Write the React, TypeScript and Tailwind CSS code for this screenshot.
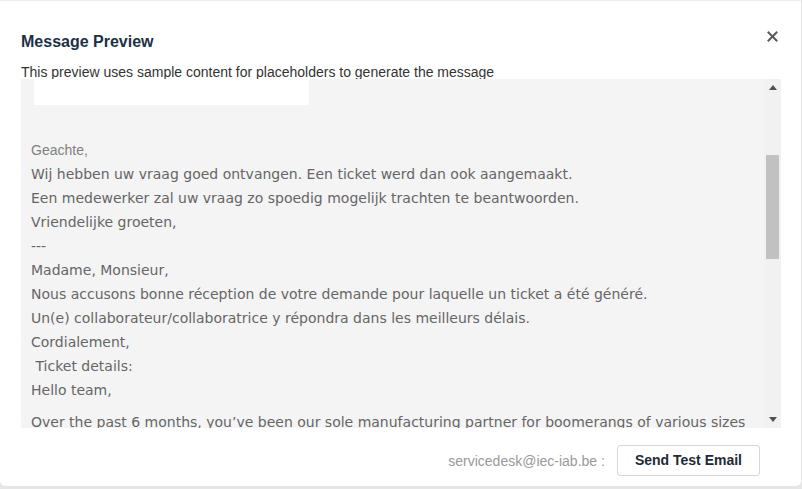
import { useEffect, useRef } from 'react';

const dutch = [
  'Wij hebben uw vraag goed ontvangen. Een ticket werd dan ook aangemaakt.',
  'Een medewerker zal uw vraag zo spoedig mogelijk trachten te beantwoorden.',
  'Vriendelijke groeten,',
  '---',
];

const french = [
  'Madame, Monsieur,',
  'Nous accusons bonne réception de votre demande pour laquelle un ticket a été généré.',
  'Un(e) collaborateur/collaboratrice y répondra dans les meilleurs délais.',
  'Cordialement,',
];

const body = [
  "Over the past 6 months, you’ve been our sole manufacturing partner for boomerangs of various sizes and shapes. We’ve been very happy with the quality of the products and the speed of delivery so far.",
  'Unfortunately, we noticed that the last three shipments arrived with a number of damaged items. The packaging seems to be the problem, as the boxes were crushed on arrival.',
  'Could you look into this and let us know how we can prevent it in the future? We would also like to discuss a replacement for the damaged boomerangs.',
  'Thanks in advance,',
];

export default function App() {
  const scrollRef = useRef<HTMLDivElement>(null);

  useEffect(() => {
    if (scrollRef.current) scrollRef.current.scrollTop = 198;
  }, []);

  return (
    <div className="w-[802px] h-[489px] bg-[#e6e6e6]" style={{ fontFamily: '"Liberation Sans", Arial, sans-serif' }}>
      <div className="w-[801px] h-[486px] bg-white border-t border-[#ececec] rounded-b-[5px] flex flex-col">
        {/* Header */}
        <div className="flex items-start justify-between pl-[21px] pr-[23px] pt-[31px]">
          <h2 className="text-[16px] leading-[20px] font-bold text-[#1c3146]">Message Preview</h2>
          <button className="mt-[-1px] text-[#5a5a5a]">
            <svg width="11" height="11" viewBox="0 0 11 11">
              <path d="M1.5 1.5 L9.5 9.5 M9.5 1.5 L1.5 9.5" stroke="currentColor" strokeWidth="2" strokeLinecap="square" />
            </svg>
          </button>
        </div>
        <p className="pl-[21px] mt-[11px] text-[14px] leading-[18px] text-[#333]">
          This preview uses sample content for placeholders to generate the message
        </p>

        {/* Preview box */}
        <div className="ml-[21px] w-[760px] h-[349px] bg-[#f4f4f4] shrink-0 flex -mt-[2px]">
          <div ref={scrollRef} className="flex-1 overflow-hidden">
            <div className="pl-[10px] pr-[8px] pt-[10px] pb-[20px]">
              <div className="ml-[3px] w-[275px] h-[214px] bg-white" />
              <div className="mt-[33px] text-[14px] leading-[24px] text-[#808080]">Geachte,</div>
              <div className="text-[14px] leading-[24px] text-[#666]" style={{ fontFamily: '"DejaVu Sans", Verdana, sans-serif' }}>
                {dutch.map((l, i) => (
                  <div key={i}>{l}</div>
                ))}
                {french.map((l, i) => (
                  <div key={i}>{l}</div>
                ))}
                <div>&nbsp;Ticket details:</div>
                <div className="mb-[8px]">Hello team,</div>
                {body.map((p, i) => (
                  <p key={i} className="mb-[8px]">{p}</p>
                ))}
                <div>The Boomerang Company</div>
              </div>
            </div>
          </div>

          {/* Scrollbar */}
          <div className="w-[17px] bg-[#f1f1f1] flex flex-col items-center">
            <div className="h-[17px] flex items-center justify-center">
              <svg width="8" height="5" viewBox="0 0 8 5">
                <path d="M4 0 L8 5 L0 5 Z" fill="#505050" />
              </svg>
            </div>
            <div className="flex-1 w-full px-[2px]">
              <div className="mt-[59px] h-[104px] bg-[#c1c1c1]" />
            </div>
            <div className="h-[17px] flex items-center justify-center">
              <svg width="8" height="5" viewBox="0 0 8 5">
                <path d="M0 0 L8 0 L4 5 Z" fill="#505050" />
              </svg>
            </div>
          </div>
        </div>

        {/* Footer */}
        <div className="flex items-center justify-end pr-[41px] mt-[17px] gap-[12px]">
          <span className="text-[14px] text-[#999] mt-[1px]">servicedesk@iec-iab.be :</span>
          <button className="h-[31px] px-[17px] border border-[#d6d6d6] rounded-[3px] bg-white text-[14px] font-bold text-[#1e2a35]">
            Send Test Email
          </button>
        </div>
      </div>
    </div>
  );
}
